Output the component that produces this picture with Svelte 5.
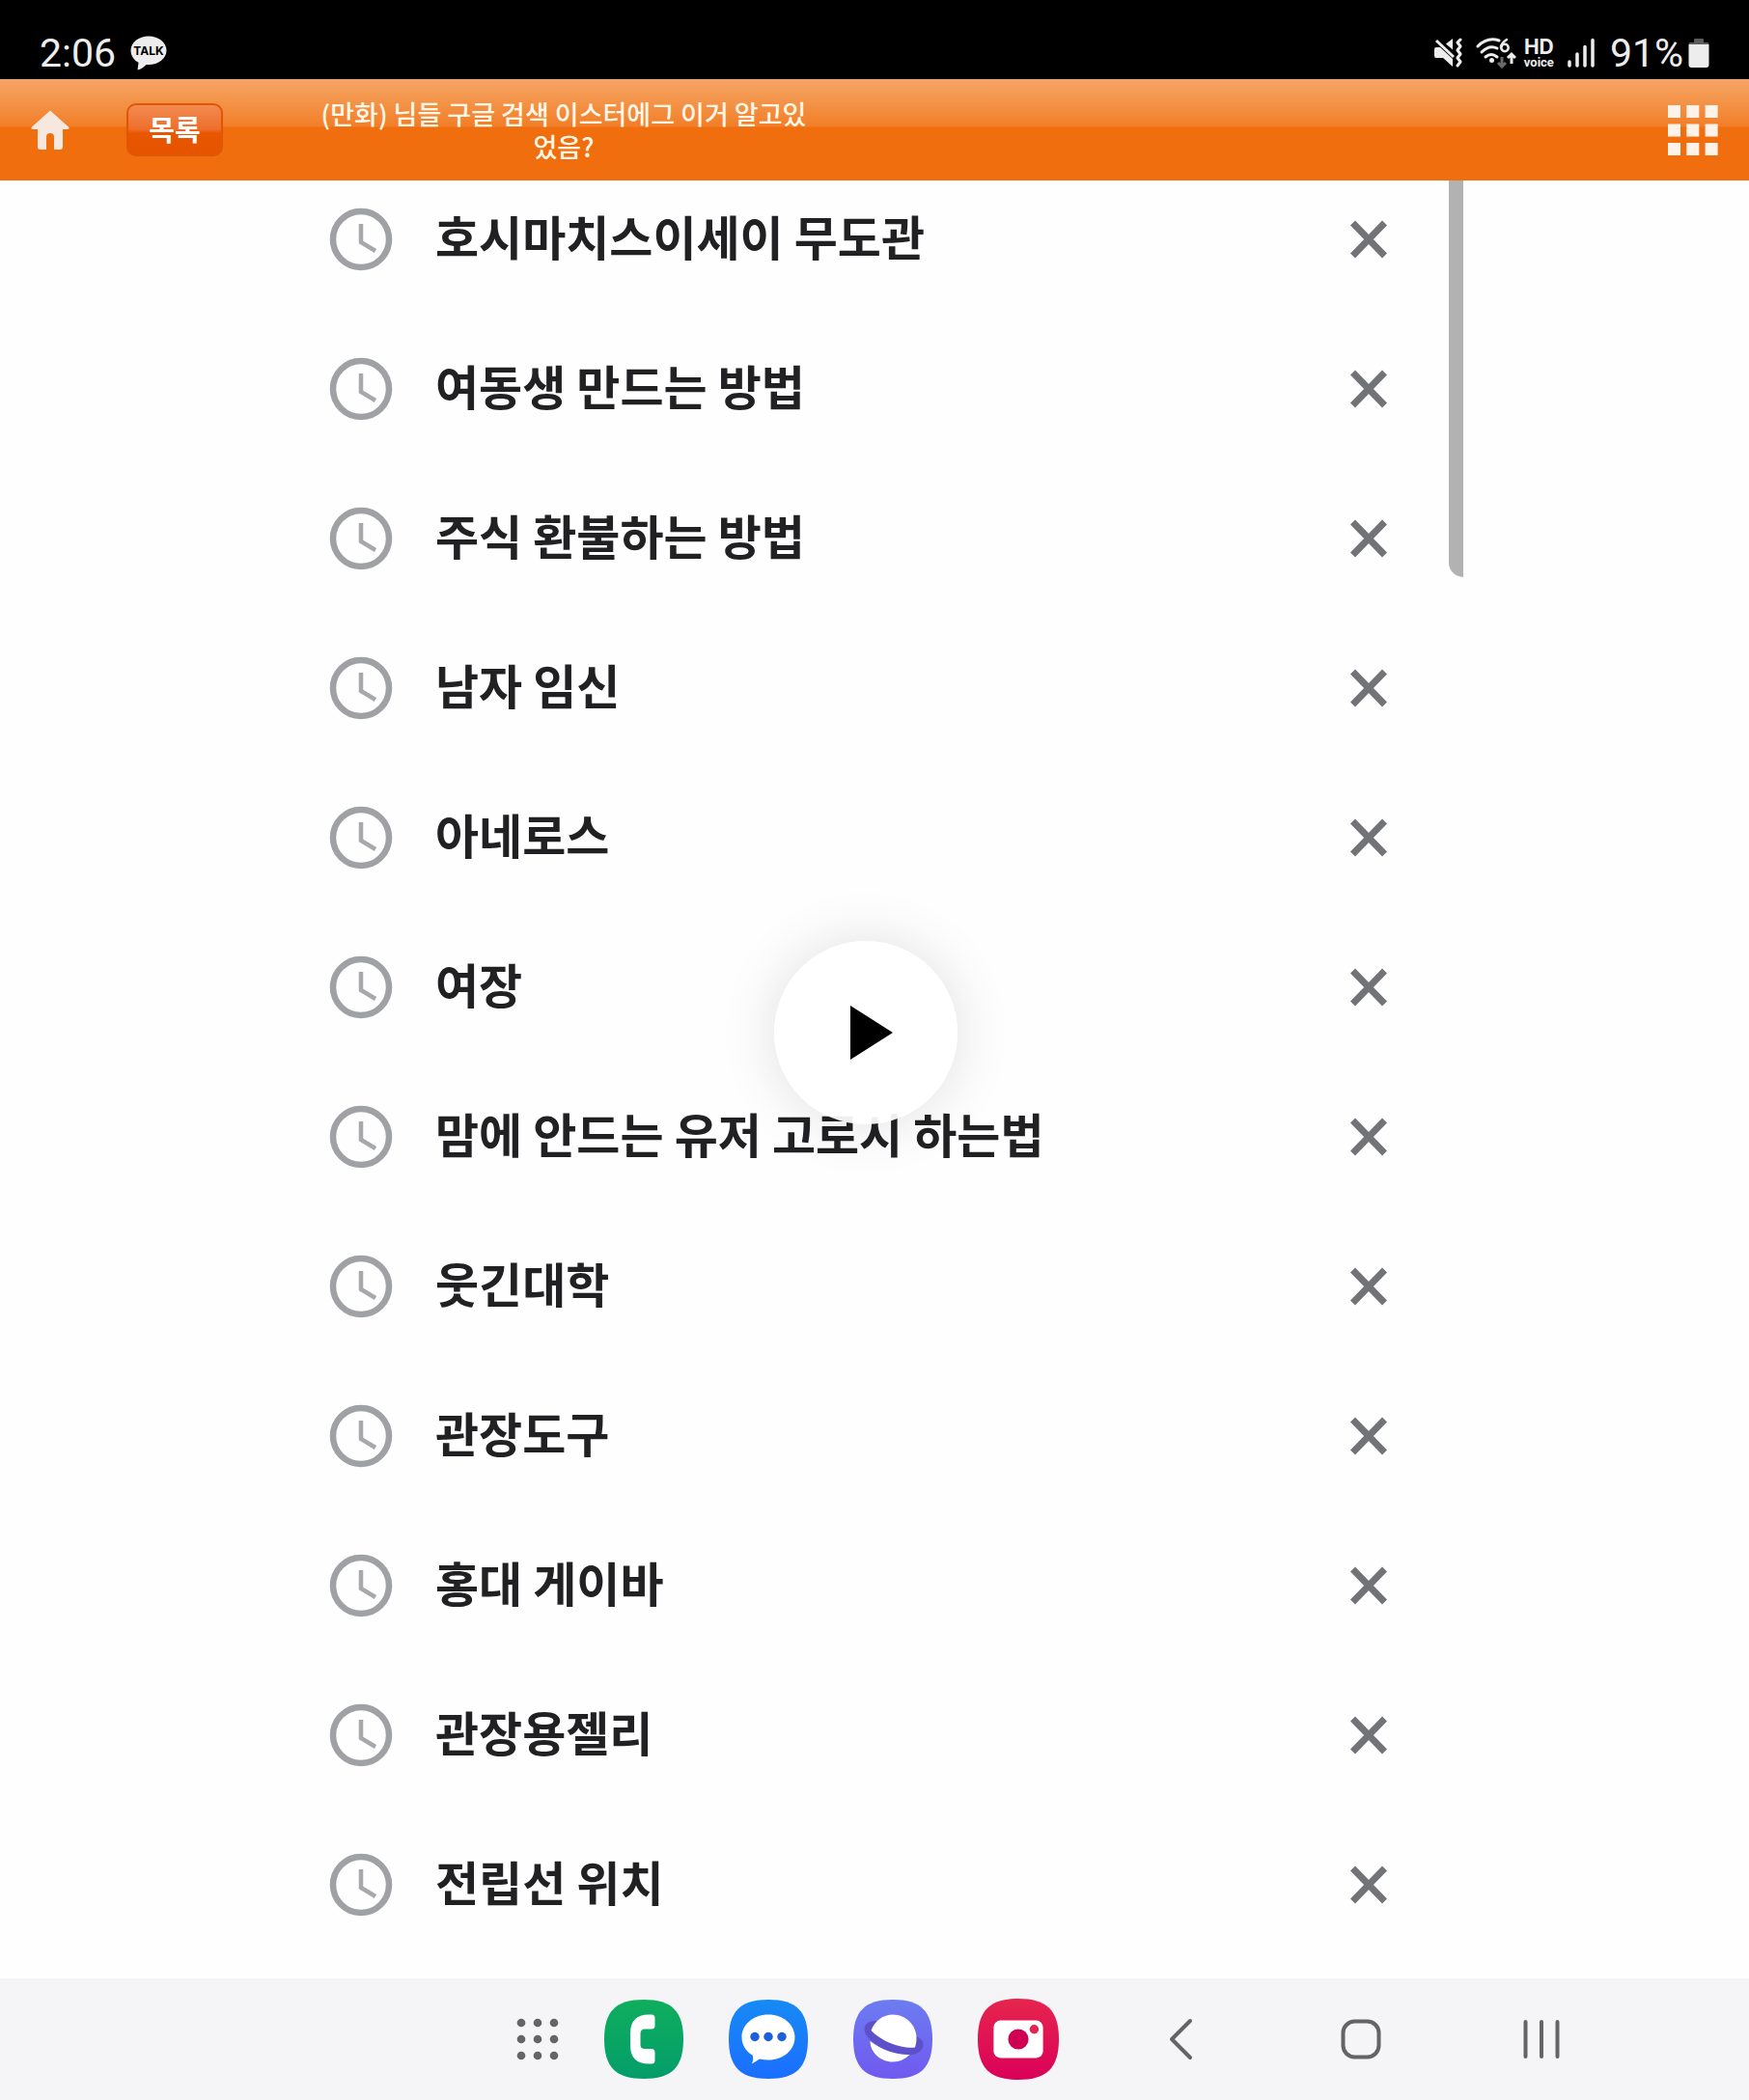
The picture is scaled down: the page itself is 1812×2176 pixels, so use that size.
<script>
  const searches = [
    '호시마치스이세이 무도관',
    '여동생 만드는 방법',
    '주식 환불하는 방법',
    '남자 임신',
    '아네로스',
    '여장',
    '맘에 안드는 유저 고로시 하는법',
    '웃긴대학',
    '관장도구',
    '홍대 게이바',
    '관장용젤리',
    '전립선 위치'
  ];
  const steps = [0, 1, 2];
  const squircle = 'M41 0C70 0 82 12 82 41S70 82 41 82 0 70 0 41 12 0 41 0Z';
</script>

<div class="screen">
  <div class="status">
    <div class="status-left">
      <span class="time">2:06</span>
      <svg class="talk" width="38" height="36" viewBox="0 0 38 36" role="img" aria-label="TALK">
        <path d="M19 0.5C29.300 .5 37.500 7 37.500 15.200S29.300 30 19 30L16.500 29.900C14 32.500 11 34.500 7.500 35.500L8.500 27.700C3.500 25 .5 20.500 .5 15.200.5 7 8.700.5 19 .5Z" fill="#ededed" />
        <text x="19" y="20" text-anchor="middle">TALK</text>
      </svg>
    </div>
    <div class="status-right">
      <svg width="31" height="32" viewBox="0 0 31 32" aria-hidden="true">
        <path d="M20 1V12.500L13 6.500ZM1 12Q1 10 3 10H7L20 22V30L10 21H3Q1 21 1 19Z" fill="#ededed" />
        <path d="M3 3L21 20" stroke="#ededed" stroke-width="3" />
        <path d="M28 2L25 5L28 9L25 13L28 17L25 21L28 25L25 29" fill="none" stroke="#ededed" stroke-width="3" stroke-linecap="round" stroke-linejoin="round" />
      </svg>
      <svg class="wifi" width="42" height="32" viewBox="0 0 42 32" role="img" aria-label="Wi-Fi 6">
        <g fill="none" stroke="#ededed" stroke-width="3" stroke-linecap="round">
          <path d="M2 9Q12 -1 24 3" />
          <path d="M6 15Q14 7 22 11" />
          <path d="M10 20Q16 15 22 20" />
          <path d="M32 2Q26 6 26 10" stroke-width="2.500" />
          <circle cx="30" cy="10.500" r="3.700" stroke-width="2.500" />
          <path d="M37 27V18M33 21L37 17L41 21" stroke-linecap="butt" />
          <path d="M27 20V29M23 26L27 30L31 26" stroke="#6a6a6a" stroke-linecap="butt" />
        </g>
        <circle cx="16.500" cy="23.500" r="2.500" fill="#ededed" />
      </svg>
      <div class="hd"><b>HD</b><span>voice</span></div>
      <svg class="signal" width="28" height="32" viewBox="0 0 28 32" aria-hidden="true">
        <path d="M2 25V29M10 17V29M18 9.500V29M26 2.500V29" stroke="#ededed" stroke-width="3.500" stroke-linecap="round" />
      </svg>
      <span class="percent">91%</span>
      <svg width="22" height="32" viewBox="0 0 22 32" aria-hidden="true">
        <path d="M6 2Q6 1 7 1H15Q16 1 16 2V5H20Q21.500 5 21.500 7H.5Q.5 5 2 5H6Z" fill="#5c5c5c" />
        <path d="M.5 7H21.500V28Q21.500 31 18.500 31H3.500Q.5 31 .5 28Z" fill="#ededed" />
      </svg>
    </div>
  </div>

  <header>
    <a class="home" href="#home" aria-label="홈">
      <svg width="40" height="42" viewBox="0 0 40 42" aria-hidden="true">
        <path d="M20 .5L39.500 18Q40 20 38 20H33V38Q33 41 30 41H24V28Q24 24 20 24T16 28V41H10Q7 41 7 38V20H2Q0 20 .5 18Z" fill="#f7e8df" />
      </svg>
    </a>
    <button class="list-button">목록</button>
    <h1>(만화) 님들 구글 검색 이스터에그 이거 알고있었음?</h1>
    <button class="menu" aria-label="메뉴">
      <svg width="52" height="52" viewBox="0 0 52 52" aria-hidden="true">
        {#each steps as row}
          {#each steps as col}
            <rect x={col * 19.3} y={row * 19.5} width="13" height="13" fill="#fff2e8" />
          {/each}
        {/each}
      </svg>
    </button>
  </header>

  <main>
    <div class="video">
      <ul>
        {#each searches as text}
          <li>
            <svg width="66" height="66" viewBox="0 0 66 66" aria-hidden="true">
              <circle cx="33" cy="33" r="29" fill="none" stroke="#9fa1a4" stroke-width="6.500" />
              <path d="M33 17V36L48 45" fill="none" stroke="#a6a8ab" stroke-width="4.500" />
            </svg>
            <span>{text}</span>
            <button class="remove" aria-label="{text} 삭제">
              <svg width="38" height="40" viewBox="0 0 38 40" aria-hidden="true">
                <path d="M2.500 3L35.500 37M35.500 3L2.500 37" stroke="#717376" stroke-width="7" />
              </svg>
            </button>
          </li>
        {/each}
      </ul>
      <div class="scrollbar"></div>
      <button class="play" aria-label="재생">
        <svg width="44" height="56" viewBox="0 0 44 56" aria-hidden="true"><path d="M0 0L44 28L0 56Z" /></svg>
      </button>
    </div>
  </main>

  <nav>
    <div class="dock">
      <button aria-label="앱">
        <svg width="44" height="44" viewBox="0 0 44 44" aria-hidden="true">
          {#each steps as row}
            {#each steps as col}
              <circle cx={5 + col * 17} cy={5 + row * 17} r="4.300" fill="#646464" />
            {/each}
          {/each}
        </svg>
      </button>
      <button aria-label="전화">
        <svg width="82" height="82" viewBox="0 0 82 82" aria-hidden="true">
          <defs><linearGradient id="green" x2="0" y2="1"><stop stop-color="#0fae5d" /><stop offset="1" stop-color="#049d6b" /></linearGradient></defs>
          <path d={squircle} fill="url(#green)" />
          <path d="M46 15.500H49Q52.500 15.500 52.500 19V27Q52.500 30.500 49 30.500H42Q37.500 30.500 37.500 35V47Q37.500 51 42 51H49Q52.500 51 52.500 54.500V63Q52.500 66.500 49 66.500H46Q27 66.500 27 47V35Q27 15.500 46 15.500Z" fill="#fff" />
        </svg>
      </button>
      <button aria-label="메시지">
        <svg width="82" height="82" viewBox="0 0 82 82" aria-hidden="true">
          <defs><linearGradient id="blue" x2="0" y2="1"><stop stop-color="#168af4" /><stop offset="1" stop-color="#1b6eff" /></linearGradient></defs>
          <path d={squircle} fill="url(#blue)" />
          <path d="M41 15.500C56.500 15.500 68.500 26 68.500 39S56.500 62.500 41 62.500Q36 62.500 32 61.500Q28 64 24 66.500Q26 62 25 58C18 54 13.500 47 13.500 39 13.500 26 25.500 15.500 41 15.500Z" fill="#fff" />
          <circle cx="27" cy="38.500" r="4.700" fill="#1b5fd9" />
          <circle cx="41" cy="38.500" r="4.700" fill="#1b5fd9" />
          <circle cx="55" cy="38.500" r="4.700" fill="#1b5fd9" />
        </svg>
      </button>
      <button aria-label="인터넷">
        <svg width="82" height="82" viewBox="0 0 82 82" aria-hidden="true">
          <defs><linearGradient id="violet" x2="0" y2="1"><stop stop-color="#6c7cf0" /><stop offset="1" stop-color="#7059f0" /></linearGradient></defs>
          <path d={squircle} fill="url(#violet)" />
          <path d="M25 22C13 21 9 29 13 36C20 48 42 58 60 57C72 56 76 46 69 40L63 37L30 23Z" fill="#5d50c9" />
          <path d="M18.500 32C22 22 31 15.500 41 15.500 54.500 15.500 65.500 26.500 65.500 40Q65.500 45 64 49.500C50 51 30 44 18.500 32Z" fill="#fff" />
          <path d="M17.500 43C29 52 44 57.500 58.500 57Q51 64.500 41 64.500C28 64.500 17.500 54.500 17.500 43Z" fill="#fff" />
        </svg>
      </button>
      <button aria-label="카메라">
        <svg width="84" height="84" viewBox="0 0 82 82" aria-hidden="true">
          <defs><linearGradient id="red" x2="0" y2="1"><stop stop-color="#e6254d" /><stop offset="1" stop-color="#da0059" /></linearGradient></defs>
          <path d={squircle} fill="url(#red)" />
          <rect x="16" y="22" width="50" height="38" rx="7" fill="#fff" />
          <circle cx="41" cy="41" r="10.300" fill="#cf0052" />
          <circle cx="57" cy="31" r="4.600" fill="#e2264f" />
        </svg>
      </button>
    </div>
    <div class="system">
      <button aria-label="뒤로">
        <svg width="44" height="44" viewBox="0 0 44 44" aria-hidden="true"><path d="M32 3L13 22L32 41" /></svg>
      </button>
      <button aria-label="홈 화면">
        <svg width="44" height="44" viewBox="0 0 44 44" aria-hidden="true"><rect x="3.500" y="3.500" width="37" height="37" rx="12" /></svg>
      </button>
      <button aria-label="최근 앱">
        <svg width="44" height="44" viewBox="0 0 44 44" aria-hidden="true"><path d="M5.500 4V40M22 4V40M38.500 4V40" /></svg>
      </button>
    </div>
  </nav>
</div>

<style>
  :global(body) {
    margin: 0;
    background: #fefefe;
  }
  .screen {
    display: flex;
    flex-direction: column;
    min-height: 100vh;
    font-family: Roboto, 'Noto Sans CJK KR', sans-serif;
  }
  svg {
    display: block;
    flex: none;
  }
  button {
    padding: 0;
    border: 0;
    background: none;
    font: inherit;
    cursor: pointer;
  }
  .status {
    display: flex;
    justify-content: space-between;
    align-items: center;
    box-sizing: border-box;
    height: 82px;
    padding: 27px 41px 0;
    background: #000;
    color: #ededed;
    font-size: 41px;
    line-height: 48px;
  }
  .status-left,
  .status-right {
    display: flex;
    align-items: center;
  }
  .status-left {
    gap: 15px;
  }
  .talk text {
    font: bold 12px Inter, sans-serif;
    fill: #000;
  }
  .wifi {
    margin-left: 13px;
  }
  .hd {
    display: flex;
    flex-direction: column;
    align-items: center;
    margin-left: 8px;
  }
  .hd b {
    font: bold 21px/19px Inter, sans-serif;
  }
  .hd span {
    font-size: 13px;
    font-weight: 700;
    line-height: 13px;
  }
  .signal {
    margin: 0 16px 0 14px;
  }
  .percent {
    margin-right: 5px;
  }
  header {
    display: flex;
    align-items: center;
    box-sizing: border-box;
    height: 105px;
    padding: 0 32px;
    background: linear-gradient(#f5a468 0, #f4984f 18px, #f27e28 49px, #f06e0e 50px);
  }
  .list-button {
    box-sizing: border-box;
    width: 100px;
    height: 55px;
    margin: 0 93px 0 59px;
    padding-bottom: 4px;
    border: 2px solid #df5704;
    border-radius: 10px;
    background: linear-gradient(#f38b52 0, #ee6e2b 25px, #e85600 29px, #e65400);
    color: #fff;
    font-family: 'Noto Sans CJK KR', sans-serif;
    font-size: 29px;
    font-weight: 700;
    line-height: 44px;
  }
  h1 {
    width: 520px;
    margin: 0 auto 0 0;
    color: #fff8e9;
    font-family: 'Noto Sans CJK KR', sans-serif;
    font-size: 27px;
    font-weight: 500;
    line-height: 34px;
    text-align: center;
    word-break: break-all;
  }
  main {
    flex: 1;
    padding: 0 296px 0 277px;
    background: #fefefe;
  }
  .video {
    position: relative;
  }
  ul {
    display: flex;
    flex-direction: column;
    gap: 33px;
    margin: 0;
    padding: 0 79px 0 64px;
    list-style: none;
  }
  li {
    display: flex;
    align-items: center;
    height: 122px;
    color: #212123;
    font-family: 'Noto Sans CJK KR', sans-serif;
    font-size: 49px;
    font-weight: 700;
    line-height: 72px;
  }
  li span {
    flex: 1;
    margin-left: 44px;
    padding-bottom: 8px;
    white-space: nowrap;
  }
  .scrollbar {
    position: absolute;
    top: 0;
    right: 0;
    width: 15px;
    height: 411px;
    border-bottom-left-radius: 15px;
    background: #b2b2b2;
  }
  .play {
    position: absolute;
    top: 788px;
    left: 50%;
    display: flex;
    align-items: center;
    justify-content: center;
    box-sizing: border-box;
    width: 190px;
    height: 190px;
    margin-left: -95px;
    padding-left: 12px;
    border-radius: 50%;
    background: rgba(255, 255, 255, 0.93);
    box-shadow: 0 0 60px rgba(0, 0, 0, 0.12);
  }
  nav {
    display: flex;
    align-items: center;
    justify-content: flex-end;
    gap: 104px;
    height: 126px;
    padding-right: 193px;
    background: #f5f5f8;
  }
  .dock,
  .system {
    display: flex;
    align-items: center;
    gap: 47px;
  }
  .system {
    gap: 143px;
  }
  .system svg {
    fill: none;
    stroke: #646464;
    stroke-width: 4;
    stroke-linecap: round;
    stroke-linejoin: round;
  }
</style>
